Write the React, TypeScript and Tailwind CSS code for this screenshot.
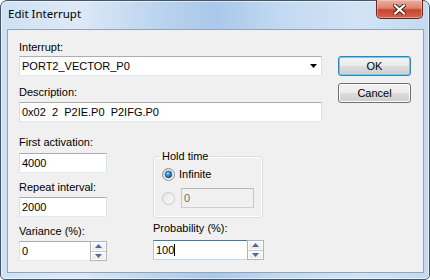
import React from 'react';

const body = "font-['Liberation_Sans',Arial,sans-serif] text-[11px] leading-[13px] text-black";

function Label({ children, className = '' }: { children: React.ReactNode; className?: string }) {
  return <div className={`h-[13px] whitespace-nowrap ${className}`}>{children}</div>;
}

interface BoxProps {
  children?: React.ReactNode;
  className?: string;
  focused?: boolean;
  disabled?: boolean;
}

function Box({ children, className = '', focused = false, disabled = false }: BoxProps) {
  let border = 'border-t-[#abadb3] border-l-[#dbdfe6] border-r-[#dbdfe6] border-b-[#e3e9ef] bg-white';
  if (focused) border = 'border-t-[#3d7bad] border-l-[#a4c9e3] border-r-[#a4c9e3] border-b-[#b7d9ed] bg-white';
  if (disabled) border = 'border-t-[#b3b7bb] border-l-[#c6c9cc] border-r-[#c6c9cc] border-b-[#ccd0d3] bg-[#f0f0f0] text-[#6d6d6d]';
  return <div className={`flex h-[20px] items-center border pl-[2px] ${border} ${className}`}>{children}</div>;
}

function Arrow({ up }: { up?: boolean }) {
  return (
    <svg width="7" height="4" viewBox="0 0 7 4">
      <path d={up ? 'M0 4 L3.5 0 L7 4 Z' : 'M0 0 L7 0 L3.5 4 Z'} fill="#4d6a98" />
    </svg>
  );
}

function Spin() {
  return (
    <div className="ml-auto mr-[-1px] flex h-[20px] w-[17px] flex-col border border-[#b4b4b4] bg-[#f0f0f0]">
      <div className="flex flex-1 items-center justify-center border-b border-[#c8c8c8] bg-[linear-gradient(#fbfbfb,#e8e8e8)] shadow-[inset_0_0_0_1px_#ffffff]">
        <Arrow up />
      </div>
      <div className="flex flex-1 items-center justify-center bg-[linear-gradient(#fbfbfb,#e8e8e8)] shadow-[inset_0_0_0_1px_#ffffff]">
        <Arrow />
      </div>
    </div>
  );
}

function Radio({ id, checked = false, disabled = false }: { id: string; checked?: boolean; disabled?: boolean }) {
  return (
    <svg width="13" height="13" viewBox="0 0 13 13" className="shrink-0">
      <defs>
        <linearGradient id={`${id}-bg`} x1="0" y1="0" x2="1" y2="1">
          <stop offset="0" stopColor={disabled ? '#e6e6e6' : '#d2d4d6'} />
          <stop offset="1" stopColor={disabled ? '#fafafa' : '#ffffff'} />
        </linearGradient>
        <radialGradient id={`${id}-dot`} cx="0.4" cy="0.35" r="0.7">
          <stop offset="0" stopColor="#9fdcff" />
          <stop offset="0.45" stopColor="#2d8ad2" />
          <stop offset="1" stopColor="#0f4d86" />
        </radialGradient>
      </defs>
      <circle cx="6.5" cy="6.5" r="6" fill={`url(#${id}-bg)`} stroke={disabled ? '#c4c7ca' : '#8b8e94'} />
      {checked && <circle cx="6.5" cy="6.5" r="3.4" fill={`url(#${id}-dot)`} stroke="#1b4e7e" strokeWidth="0.6" />}
    </svg>
  );
}

function CloseButton() {
  return (
    <div className="-mt-px mr-[6px] flex h-[19px] w-[47px] items-center justify-center rounded-b-[5px] border border-t-0 border-[#6b2418] bg-[linear-gradient(#eab1a3_0%,#dc8470_45%,#c8442e_55%,#d5654b_100%)] shadow-[inset_0_0_0_1px_rgba(255,220,210,0.45)]">
      <svg width="13" height="11" viewBox="0 0 13 11">
        <path d="M2 1.5 L11 9.5 M11 1.5 L2 9.5" stroke="#4a1a12" strokeWidth="4" strokeLinecap="square" />
        <path d="M2 1.5 L11 9.5 M11 1.5 L2 9.5" stroke="#ffffff" strokeWidth="2.2" strokeLinecap="square" />
      </svg>
    </div>
  );
}

function Button({ children, isDefault = false }: { children: React.ReactNode; isDefault?: boolean }) {
  return (
    <button
      className={`flex h-[20px] w-[73px] items-center justify-center rounded-[3px] border bg-[linear-gradient(#f3f3f3_0%,#ebebeb_50%,#dddddd_50%,#cfcfcf_100%)] ${
        isDefault
          ? 'border-[#3c7fb1] shadow-[inset_0_0_0_1px_#5fd0f7]'
          : 'border-[#707070] shadow-[inset_0_0_0_1px_#fcfcfc]'
      }`}
    >
      {children}
    </button>
  );
}

export default function App() {
  return (
    <div className="h-[280px] w-[430px] bg-white">
      <div className="flex h-full w-full flex-col rounded-t-[7px] rounded-b-[5px] border border-[#46566a] bg-[linear-gradient(90deg,#cfe1f4_0%,#dde9f7_18%,#bcd5ef_36%,#aac8ea_50%,#c3daf2_66%,#d2e3f5_84%,#c4daf1_100%)] shadow-[inset_0_0_0_1px_rgba(255,255,255,0.55)]">
        <div className="flex h-[28px] items-start justify-between">
          <div className="pl-[7px] pt-[5px] font-['Noto_Sans',sans-serif] text-[11.5px] leading-[16px] text-black">
            Edit Interrupt
          </div>
          <CloseButton />
        </div>

        <div className={`mb-[6px] ml-[6px] mr-[5px] flex flex-1 items-start border border-[#8fa3ba] bg-[#f0f0f0] pl-[11px] pt-[11px] ${body}`}>
          <div className="flex w-[303px] flex-col">
            <Label>Interrupt:</Label>
            <Box className="mt-[2px]">
              <span>PORT2_VECTOR_P0</span>
              <span className="ml-auto pr-[4px]">
                <svg width="7" height="4" viewBox="0 0 7 4" className="block">
                  <path d="M0 0 L7 0 L3.5 4 Z" fill="#000" />
                </svg>
              </span>
            </Box>
            <Label className="mt-[10px]">Description:</Label>
            <Box className="mt-[3px]">
              <span className="whitespace-pre">0x02  2  P2IE.P0  P2IFG.P0</span>
            </Box>

            <div className="mt-[14px] flex items-start">
              <div className="flex w-[88px] flex-col">
                <Label>First activation:</Label>
                <Box className="mt-[4px]">4000</Box>
                <Label className="mt-[8px]">Repeat interval:</Label>
                <Box className="mt-[3px]">2000</Box>
                <Label className="mt-[8px]">Variance (%):</Label>
                <Box className="mt-[3px]">
                  <span>0</span>
                  <Spin />
                </Box>
              </div>

              <div className="ml-[46px] flex w-[111px] flex-col">
                <fieldset className="mt-[14px] h-[68px] w-[110px] rounded-[3px] border border-[#d5dfe5] pl-[8px] shadow-[inset_0_0_0_1px_#ffffff]">
                  <legend className="-ml-[2px] px-[2px]">Hold time</legend>
                  <div className="mt-[5px] flex h-[13px] items-center">
                    <Radio id="r1" checked />
                    <span className="ml-[4px]">Infinite</span>
                  </div>
                  <div className="mt-[7px] flex items-center">
                    <Radio id="r2" disabled />
                    <Box disabled className="ml-[6px] w-[73px]">0</Box>
                  </div>
                </fieldset>
                <Label className="mt-[4px]">Probability (%):</Label>
                <Box focused className="mt-[5px]">
                  <span>100</span>
                  <span className="inline-block h-[12px] w-px bg-black" />
                  <Spin />
                </Box>
              </div>
            </div>
          </div>

          <div className="ml-[16px] mt-[15px] flex flex-col gap-[7px]">
            <Button isDefault>OK</Button>
            <Button>Cancel</Button>
          </div>
        </div>
      </div>
    </div>
  );
}
